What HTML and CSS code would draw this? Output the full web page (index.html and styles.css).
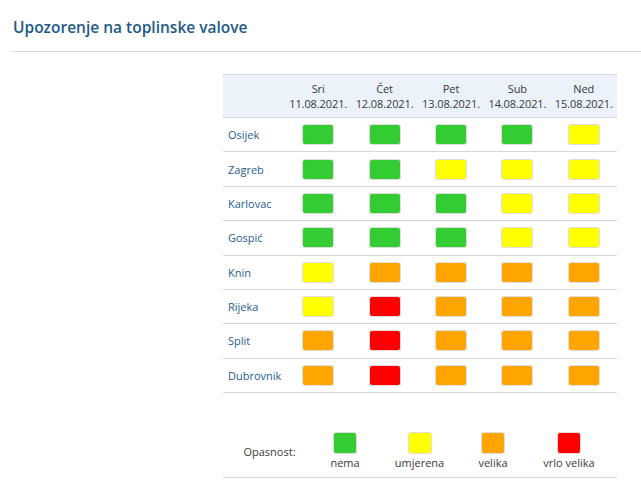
FILE: index.html
```html
<!DOCTYPE html>
<html lang="hr">
<head>
<meta charset="utf-8">
<title>Upozorenje na toplinske valove</title>
<link rel="stylesheet" href="styles.css">
</head>
<body>
<header class="page-header">
  <h1 class="page-title">Upozorenje na toplinske valove</h1>
</header>
<main class="content">
  <div class="warn-table">
    <div class="row head">
      <div class="cell"></div>
      <div class="cell day">Sri<br>11.08.2021.</div>
      <div class="cell day">Čet<br>12.08.2021.</div>
      <div class="cell day">Pet<br>13.08.2021.</div>
      <div class="cell day">Sub<br>14.08.2021.</div>
      <div class="cell day">Ned<br>15.08.2021.</div>
    </div>
    <div class="row"><div class="city">Osijek</div><span class="box g"></span><span class="box g"></span><span class="box g"></span><span class="box g"></span><span class="box y"></span></div>
    <div class="row"><div class="city">Zagreb</div><span class="box g"></span><span class="box g"></span><span class="box y"></span><span class="box y"></span><span class="box y"></span></div>
    <div class="row"><div class="city">Karlovac</div><span class="box g"></span><span class="box g"></span><span class="box g"></span><span class="box y"></span><span class="box y"></span></div>
    <div class="row"><div class="city">Gospić</div><span class="box g"></span><span class="box g"></span><span class="box g"></span><span class="box y"></span><span class="box y"></span></div>
    <div class="row"><div class="city">Knin</div><span class="box y"></span><span class="box o"></span><span class="box o"></span><span class="box o"></span><span class="box o"></span></div>
    <div class="row"><div class="city">Rijeka</div><span class="box y"></span><span class="box r"></span><span class="box o"></span><span class="box o"></span><span class="box o"></span></div>
    <div class="row"><div class="city">Split</div><span class="box o"></span><span class="box r"></span><span class="box o"></span><span class="box o"></span><span class="box o"></span></div>
    <div class="row"><div class="city">Dubrovnik</div><span class="box o"></span><span class="box r"></span><span class="box o"></span><span class="box o"></span><span class="box o"></span></div>
  </div>
  <div class="legend">
    <div class="legend-title">Opasnost:</div>
    <div class="legend-item"><span class="lbox g"></span><span>nema</span></div>
    <div class="legend-item"><span class="lbox y"></span><span>umjerena</span></div>
    <div class="legend-item"><span class="lbox o"></span><span>velika</span></div>
    <div class="legend-item"><span class="lbox r"></span><span>vrlo velika</span></div>
  </div>
</main>
</body>
</html>
```

FILE: styles.css
```css
html, body {
  margin: 0;
  padding: 0;
  background: #ffffff;
}
body {
  font-family: "Open Sans", "Liberation Sans", sans-serif;
  color: #333333;
}
.page-header {
  margin-left: 13px;
  height: 52px;
  border-bottom: 1px solid #d8d8d8;
  box-sizing: border-box;
  padding-top: 17px;
}
.page-title {
  margin: 0;
  font-size: 15.5px;
  line-height: 21px;
  font-weight: 600;
  color: #1d5a86;
}
.content {
  padding: 22px 0 0 223px;
}
.warn-table {
  width: 394px;
  font-size: 11px;
}
.row {
  display: grid;
  grid-template-columns: 62px repeat(5, 1fr);
  align-items: center;
  justify-items: center;
  height: 34.375px;
  box-sizing: border-box;
  border-bottom: 1px solid #d3d7dd;
}
.row.head {
  height: 44px;
  border-top: 1px solid #d3d7dd;
  background: #ebf2fa;
  line-height: 15px;
}
.day {
  text-align: center;
  color: #3a3a3a;
  white-space: nowrap;
  letter-spacing: -0.1px;
}
.city {
  justify-self: start;
  padding-left: 5px;
  color: #1e5e8f;
}
.box {
  width: 32px;
  height: 21px;
  box-sizing: border-box;
  border: 1px solid #dedede;
  border-radius: 3px;
}
.g { background: #33cc33; }
.y { background: #ffff00; }
.o { background: #ffa500; }
.r { background: #ff0000; }
.legend {
  width: 394px;
  display: grid;
  grid-template-columns: 93px 58px 91px 56px 96px;
  align-items: center;
  padding: 39px 0 7px;
  border-bottom: 1px solid #d3d7dd;
  font-size: 11px;
  line-height: 15px;
  color: #3a3a3a;
}
.legend-title {
  text-align: center;
}
.legend-item {
  display: flex;
  flex-direction: column;
  align-items: center;
  gap: 1px;
}
.lbox {
  width: 24px;
  height: 22px;
  box-sizing: border-box;
  border: 1px solid #dedede;
  border-radius: 3px;
}
```
